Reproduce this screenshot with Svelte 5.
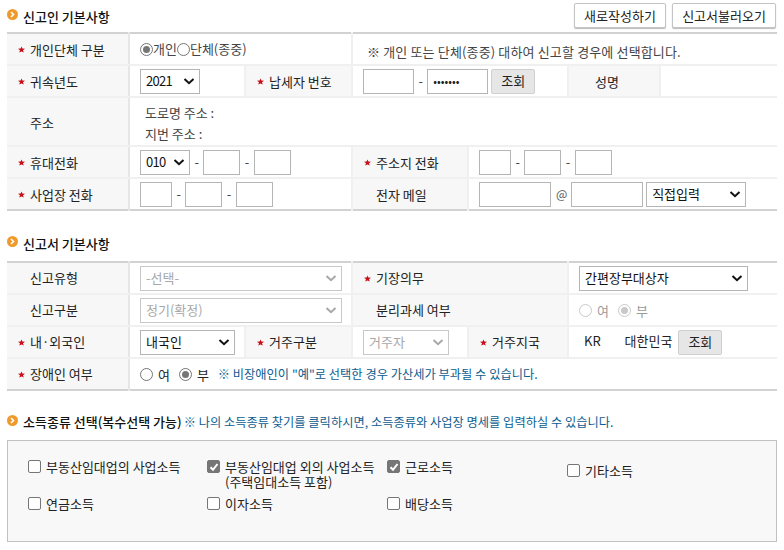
<script lang="ts">
  // Column widths are shared by both form tables
  const cols = [122, 116, 107, 116, 100, 92, 117];
</script>

{#snippet colgroup()}
  <colgroup>
    {#each cols as w}
      <col style="width: {w}px" />
    {/each}
  </colgroup>
{/snippet}

{#snippet star()}
  <svg class="star" width="7" height="7" viewBox="0 0 7 7" aria-hidden="true">
    <path d="M3.5 0.5 L4.4 2.5 L7 2.8 L5 4.2 L5.8 6.6 L3.5 5.4 L1.2 6.6 L2 4.2 L0 2.8 L2.6 2.5 Z" fill="#c8101a" />
  </svg>
{/snippet}

{#snippet bullet()}
  <svg class="bullet" width="11" height="11" viewBox="0 0 11 11" aria-hidden="true">
    <circle cx="5.5" cy="5.5" r="5.5" fill="#ee9a2c" />
    <path d="M4 3 L6.5 5.5 L4 8" fill="none" stroke="#fff" stroke-width="1.6" />
  </svg>
{/snippet}

{#snippet caret(color)}
  <svg class="caret" width="12" height="7" viewBox="0 0 12 7" aria-hidden="true">
    <path d="M1.5 1 L6 5.2 L10.5 1" fill="none" stroke={color} stroke-width="2" />
  </svg>
{/snippet}

{#snippet select(text, width, disabled = false, numeric = false)}
  <span class="select" class:disabled class:numeric style="width: {width}px">
    <span>{text}</span>
    {@render caret(disabled ? '#a8a8a8' : '#111')}
  </span>
{/snippet}

{#snippet radio(checked, disabled = false)}
  <span class="radio" class:checked class:disabled></span>
{/snippet}

{#snippet check(checked)}
  <span class="check" class:checked>
    {#if checked}
      <svg width="10" height="10" viewBox="0 0 10 10" aria-hidden="true">
        <path d="M1.5 5.2 L4 7.8 L8.5 2" fill="none" stroke="#fff" stroke-width="2" />
      </svg>
    {/if}
  </span>
{/snippet}

<main class="page">
  <header class="head first">
    <h2>{@render bullet()}신고인 기본사항</h2>
    <div class="actions">
      <button class="btn">새로작성하기</button>
      <button class="btn">신고서불러오기</button>
    </div>
  </header>

  <table class="reporter">
    {@render colgroup()}
    <tbody>
      <tr>
        <th>{@render star()}개인단체 구분</th>
        <td colspan="2" class="radios tight">
          {@render radio(true)}<span>개인</span>{@render radio(false)}<span>단체(종중)</span>
        </td>
        <td colspan="4" class="note">※ 개인 또는 단체(종중) 대하여 신고할 경우에 선택합니다.</td>
      </tr>
      <tr>
        <th>{@render star()}귀속년도</th>
        <td>{@render select('2021', 60, false, true)}</td>
        <th>{@render star()}납세자 번호</th>
        <td colspan="2">
          <span class="input" style="width: 51px"></span>
          <span class="dash">-</span>
          <span class="input masked" style="width: 61px">•••••••</span>
          <button class="lookup">조회</button>
        </td>
        <th class="center">성명</th>
        <td></td>
      </tr>
      <tr class="addr">
        <th>주소</th>
        <td colspan="6" class="addr-cell">
          <div class="addr-line">도로명 주소 :</div>
          <div class="addr-line">지번 주소 :</div>
        </td>
      </tr>
      <tr>
        <th>{@render star()}휴대전화</th>
        <td colspan="2">
          {@render select('010', 50, false, true)}
          <span class="dash">-</span>
          <span class="input" style="width: 37px"></span>
          <span class="dash">-</span>
          <span class="input" style="width: 37px"></span>
        </td>
        <th>{@render star()}주소지 전화</th>
        <td colspan="3">
          <span class="input" style="width: 32px"></span>
          <span class="dash">-</span>
          <span class="input" style="width: 37px"></span>
          <span class="dash">-</span>
          <span class="input" style="width: 37px"></span>
        </td>
      </tr>
      <tr>
        <th>{@render star()}사업장 전화</th>
        <td colspan="2">
          <span class="input" style="width: 32px"></span>
          <span class="dash">-</span>
          <span class="input" style="width: 37px"></span>
          <span class="dash">-</span>
          <span class="input" style="width: 37px"></span>
        </td>
        <th>전자 메일</th>
        <td colspan="3">
          <span class="input" style="width: 72px"></span>
          <span class="at">@</span>
          <span class="input" style="width: 72px"></span>
          {@render select('직접입력', 100)}
        </td>
      </tr>
    </tbody>
  </table>

  <header class="head second">
    <h2>{@render bullet()}신고서 기본사항</h2>
  </header>

  <table>
    {@render colgroup()}
    <tbody>
      <tr>
        <th>신고유형</th>
        <td colspan="2">{@render select('-선택-', 202, true)}</td>
        <th colspan="2">{@render star()}기장의무</th>
        <td colspan="2">{@render select('간편장부대상자', 169)}</td>
      </tr>
      <tr>
        <th>신고구분</th>
        <td colspan="2">{@render select('정기(확정)', 202, true)}</td>
        <th colspan="2">분리과세 여부</th>
        <td colspan="2" class="radios off">
          {@render radio(false, true)}<span class="opt">여</span>
          {@render radio(true, true)}<span class="opt">부</span>
        </td>
      </tr>
      <tr>
        <th>{@render star()}내·외국인</th>
        <td>{@render select('내국인', 95)}</td>
        <th>{@render star()}거주구분</th>
        <td>{@render select('거주자', 86, true)}</td>
        <th>{@render star()}거주지국</th>
        <td colspan="2" class="nation">
          <span class="kr">KR</span>
          <span class="kr-name">대한민국</span>
          <button class="lookup">조회</button>
        </td>
      </tr>
      <tr>
        <th>{@render star()}장애인 여부</th>
        <td colspan="6" class="radios">
          {@render radio(false)}<span class="opt">여</span>
          {@render radio(true)}<span class="opt">부</span>
          <span class="hint small">※ 비장애인이 "예"로 선택한 경우 가산세가 부과될 수 있습니다.</span>
        </td>
      </tr>
    </tbody>
  </table>

  <header class="head third">
    <h2>{@render bullet()}소득종류 선택(복수선택 가능)</h2>
    <span class="hint">※ 나의 소득종류 찾기를 클릭하시면, 소득종류와 사업장 명세를 입력하실 수 있습니다.</span>
  </header>

  <section class="income">
    <label class="item a">{@render check(false)}<span>부동산임대업의 사업소득</span></label>
    <label class="item b">{@render check(true)}<span>부동산임대업 외의 사업소득<br />(주택임대소득 포함)</span></label>
    <label class="item c">{@render check(true)}<span>근로소득</span></label>
    <label class="item d">{@render check(false)}<span>기타소득</span></label>
    <label class="item e">{@render check(false)}<span>연금소득</span></label>
    <label class="item f">{@render check(false)}<span>이자소득</span></label>
    <label class="item g">{@render check(false)}<span>배당소득</span></label>
  </section>
</main>

<style>
  :global(body) {
    margin: 0;
    background: #fff;
    color: #222;
    font-family: "Noto Sans CJK KR", "Noto Sans", sans-serif;
    font-size: 13px;
  }

  .page {
    width: 770px;
    margin-left: 7px;
    height: 550px;
    overflow: hidden;
  }

  /* ── Section headers ─────────────────────────── */
  .head {
    display: flex;
    align-items: center;
  }
  .head.first {
    justify-content: space-between;
    height: 32px;
  }
  .head.second {
    height: 50px;
    padding-top: 14px;
    box-sizing: border-box;
  }
  .head.third {
    height: 49px;
    padding-top: 12px;
    box-sizing: border-box;
    gap: 2px;
  }
  h2 {
    margin: 0;
    font-size: 13px;
    font-weight: 500;
    color: #111;
    display: flex;
    align-items: center;
    white-space: nowrap;
  }
  .bullet {
    margin-right: 5px;
    margin-top: -3px;
    flex-shrink: 0;
  }
  .actions {
    display: flex;
    gap: 6px;
    margin: 0 1px 1px 0;
  }
  .btn {
    height: 25px;
    padding: 0;
    width: 92px;
    background: #fff;
    border: 1px solid #c4c4c4;
    border-radius: 2px;
    box-shadow: 0 1px 1px #bbb;
    font: inherit;
    font-size: 13px;
    color: #222;
  }
  .btn + .btn {
    width: 104px;
  }

  /* ── Tables ──────────────────────────────────── */
  table {
    width: 770px;
    table-layout: fixed;
    border-collapse: collapse;
    border-top: 2px solid #d2d2d2;
    border-bottom: 2px solid #d2d2d2;
  }
  tr {
    height: 32px;
  }
  tr.addr {
    height: 49px;
  }
  th,
  td {
    padding: 0 0 0 10px;
    border-bottom: 2px solid #f0f0f0;
    border-left: 2px solid #f0f0f0;
    font-weight: 400;
    text-align: left;
    white-space: nowrap;
    line-height: 18px;
    box-sizing: border-box;
  }
  tr:last-child th,
  tr:last-child td {
    border-bottom: 0;
  }
  th {
    background: #f7f7f7;
    padding-left: 23px;
    position: relative;
    color: #222;
  }
  .reporter th {
    padding-top: 2px;
  }
  th:first-child {
    border-left: 0;
  }
  th:first-child + td {
    border-left: 2px solid #e6e6e6;
  }
  th.center {
    padding-left: 26px;
  }
  .star {
    position: absolute;
    left: 11px;
    top: 12px;
  }

  /* ── Form controls ───────────────────────────── */
  .input,
  .select {
    display: inline-flex;
    align-items: center;
    height: 25px;
    box-sizing: border-box;
    border: 1px solid #b5b5b5;
    background: #fff;
    vertical-align: middle;
  }
  .masked {
    padding-left: 5px;
    font-size: 11px;
    letter-spacing: 0;
    color: #222;
  }
  .select {
    justify-content: space-between;
    padding: 0 4px 0 5px;
    color: #111;
  }
  .select.numeric {
    letter-spacing: -0.7px;
  }
  .select.disabled {
    color: #a8a8a8;
    border-color: #c8c8c8;
  }
  .dash {
    margin: 0 1.5px;
    color: #444;
    vertical-align: middle;
  }
  .at {
    margin: 0 1px 0 2px;
    color: #555;
    font-size: 12px;
    vertical-align: middle;
  }
  .lookup {
    height: 25px;
    width: 44px;
    padding: 0;
    border: 1px solid #d0d0d0;
    border-radius: 2px;
    background: #e6e6e6;
    font: inherit;
    color: #222;
    vertical-align: middle;
  }
  .radios {
    vertical-align: middle;
  }
  .radio {
    display: inline-block;
    width: 13px;
    height: 13px;
    box-sizing: border-box;
    border: 1px solid #767676;
    border-radius: 50%;
    background: #fff;
    vertical-align: middle;
    position: relative;
  }
  .radio.checked::after {
    content: "";
    position: absolute;
    inset: 2px;
    border-radius: 50%;
    background: #767676;
  }
  .radio.disabled {
    border-color: #c9c9c9;
  }
  .radio.disabled.checked::after {
    background: #c9c9c9;
  }
  .tight {
    color: #444;
  }
  .tight span:not(.radio) {
    vertical-align: middle;
  }
  .opt {
    margin: 0 6px 0 5px;
    vertical-align: middle;
  }
  .off {
    color: #9a9a9a;
  }
  .note {
    font-size: 13px;
    letter-spacing: 0.15px;
    color: #444;
    padding-left: 14px;
    padding-top: 5px;
  }
  .hint {
    font-size: 12.2px;
    letter-spacing: 0.05px;
    color: #0b5c8f;
    white-space: nowrap;
  }
  .hint.small {
    vertical-align: middle;
  }
  .addr-cell {
    padding-top: 3px;
  }
  .addr-line {
    line-height: 21px;
    color: #444;
    padding-left: 5px;
  }
  .kr {
    margin: 0 21px 0 5px;
  }
  .kr-name {
    margin-right: 3px;
  }

  /* ── Income type box ─────────────────────────── */
  .income {
    height: 102px;
    box-sizing: border-box;
    border: 1px solid #c2c2c2;
    background: #f8f8f8;
    position: relative;
  }
  .item {
    position: absolute;
    display: flex;
    gap: 5px;
    line-height: 15px;
    font-size: 13px;
    color: #222;
  }
  .a { left: 20px; top: 18px; }
  .b { left: 199px; top: 18px; }
  .c { left: 379px; top: 18px; }
  .d { left: 559px; top: 22px; }
  .e { left: 20px; top: 55px; }
  .f { left: 199px; top: 55px; }
  .g { left: 379px; top: 55px; }
  .check {
    width: 13px;
    height: 13px;
    box-sizing: border-box;
    border: 1px solid #767676;
    border-radius: 2px;
    background: #fff;
    flex-shrink: 0;
    margin-top: 1px;
    display: flex;
    align-items: center;
    justify-content: center;
  }
  .check.checked {
    background: #767676;
  }
</style>
